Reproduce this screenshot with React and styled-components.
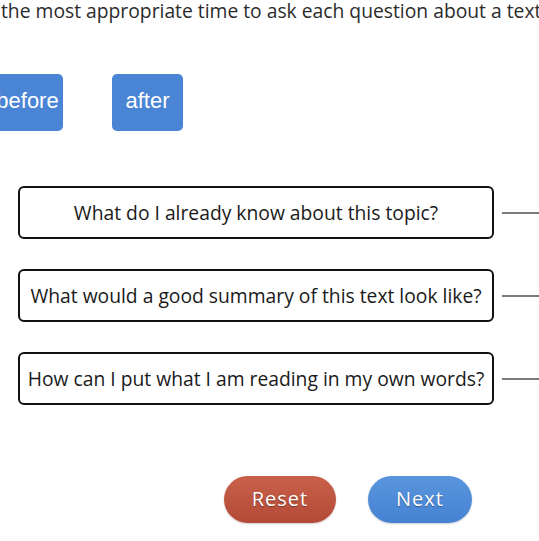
import React from "react";
import styled, { createGlobalStyle } from "styled-components";

const GlobalStyle = createGlobalStyle`
  html, body {
    margin: 0;
    padding: 0;
    background: #fff;
    overflow: hidden;
  }
`;

const questions = [
  "What do I already know about this topic?",
  "What would a good summary of this text look like?",
  "How can I put what I am reading in my own words?",
];

export default function App() {
  return (
    <>
      <GlobalStyle />
      <Page>
        <Prompt>the most appropriate time to ask each question about a text</Prompt>
        <Targets>
          <Target>before</Target>
          <Target>after</Target>
        </Targets>
        <Questions>
          {questions.map((q) => (
            <Row key={q}>
              <Card>{q}</Card>
              <Connector />
            </Row>
          ))}
        </Questions>
        <Actions>
          <Pill $tone="red">Reset</Pill>
          <Pill $tone="blue">Next</Pill>
        </Actions>
      </Page>
    </>
  );
}

const Page = styled.div`
  width: 539px;
  height: 541px;
  overflow: hidden;
  font-family: "Open Sans", "Noto Sans", sans-serif;
`;

const Prompt = styled.div`
  margin: 0 0 0 1px;
  font-size: 19.3px;
  line-height: 22px;
  color: #2b2b2b;
  white-space: nowrap;
`;

const Targets = styled.div`
  display: flex;
  gap: 49px;
  margin-top: 52px;
  margin-left: -8px;
`;

const Target = styled.div`
  box-sizing: border-box;
  width: 71px;
  height: 57px;
  padding-bottom: 4px;
  display: flex;
  align-items: center;
  justify-content: center;
  background: #4a84d4;
  border-radius: 5px;
  color: #fff;
  font-family: "Liberation Sans", Arial, sans-serif;
  font-size: 22px;
  white-space: nowrap;
`;

const Questions = styled.div`
  display: flex;
  flex-direction: column;
  gap: 30px;
  margin-top: 55px;
  margin-left: 18px;
`;

const Row = styled.div`
  display: flex;
  align-items: center;
`;

const Card = styled.div`
  box-sizing: border-box;
  width: 476px;
  height: 53px;
  flex-shrink: 0;
  display: flex;
  align-items: center;
  justify-content: center;
  padding-bottom: 1px;
  border: 2.5px solid #111;
  border-radius: 6px;
  font-size: 19.3px;
  color: #1a1a1a;
  white-space: nowrap;
`;

const Connector = styled.div`
  flex: 1;
  height: 2px;
  margin-left: 8px;
  background: #7a7a7a;
`;

const Actions = styled.div`
  display: flex;
  gap: 32px;
  margin-top: 71px;
  margin-left: 224px;
`;

const Pill = styled.div`
  box-sizing: border-box;
  height: 47px;
  width: ${(p) => (p.$tone === "red" ? 112 : 104)}px;
  padding-bottom: 2px;
  border-radius: 24px;
  display: flex;
  align-items: center;
  justify-content: center;
  color: #fff;
  font-size: 20px;
  letter-spacing: 1px;
  text-shadow: 0 1px 1px rgba(0, 0, 0, 0.35);
  background: ${(p) =>
    p.$tone === "red"
      ? "linear-gradient(#c8604a, #b44a37)"
      : "linear-gradient(#5a95dd, #4482d2)"};
  box-shadow: 0 1px 2px rgba(0, 0, 0, 0.2);
`;
